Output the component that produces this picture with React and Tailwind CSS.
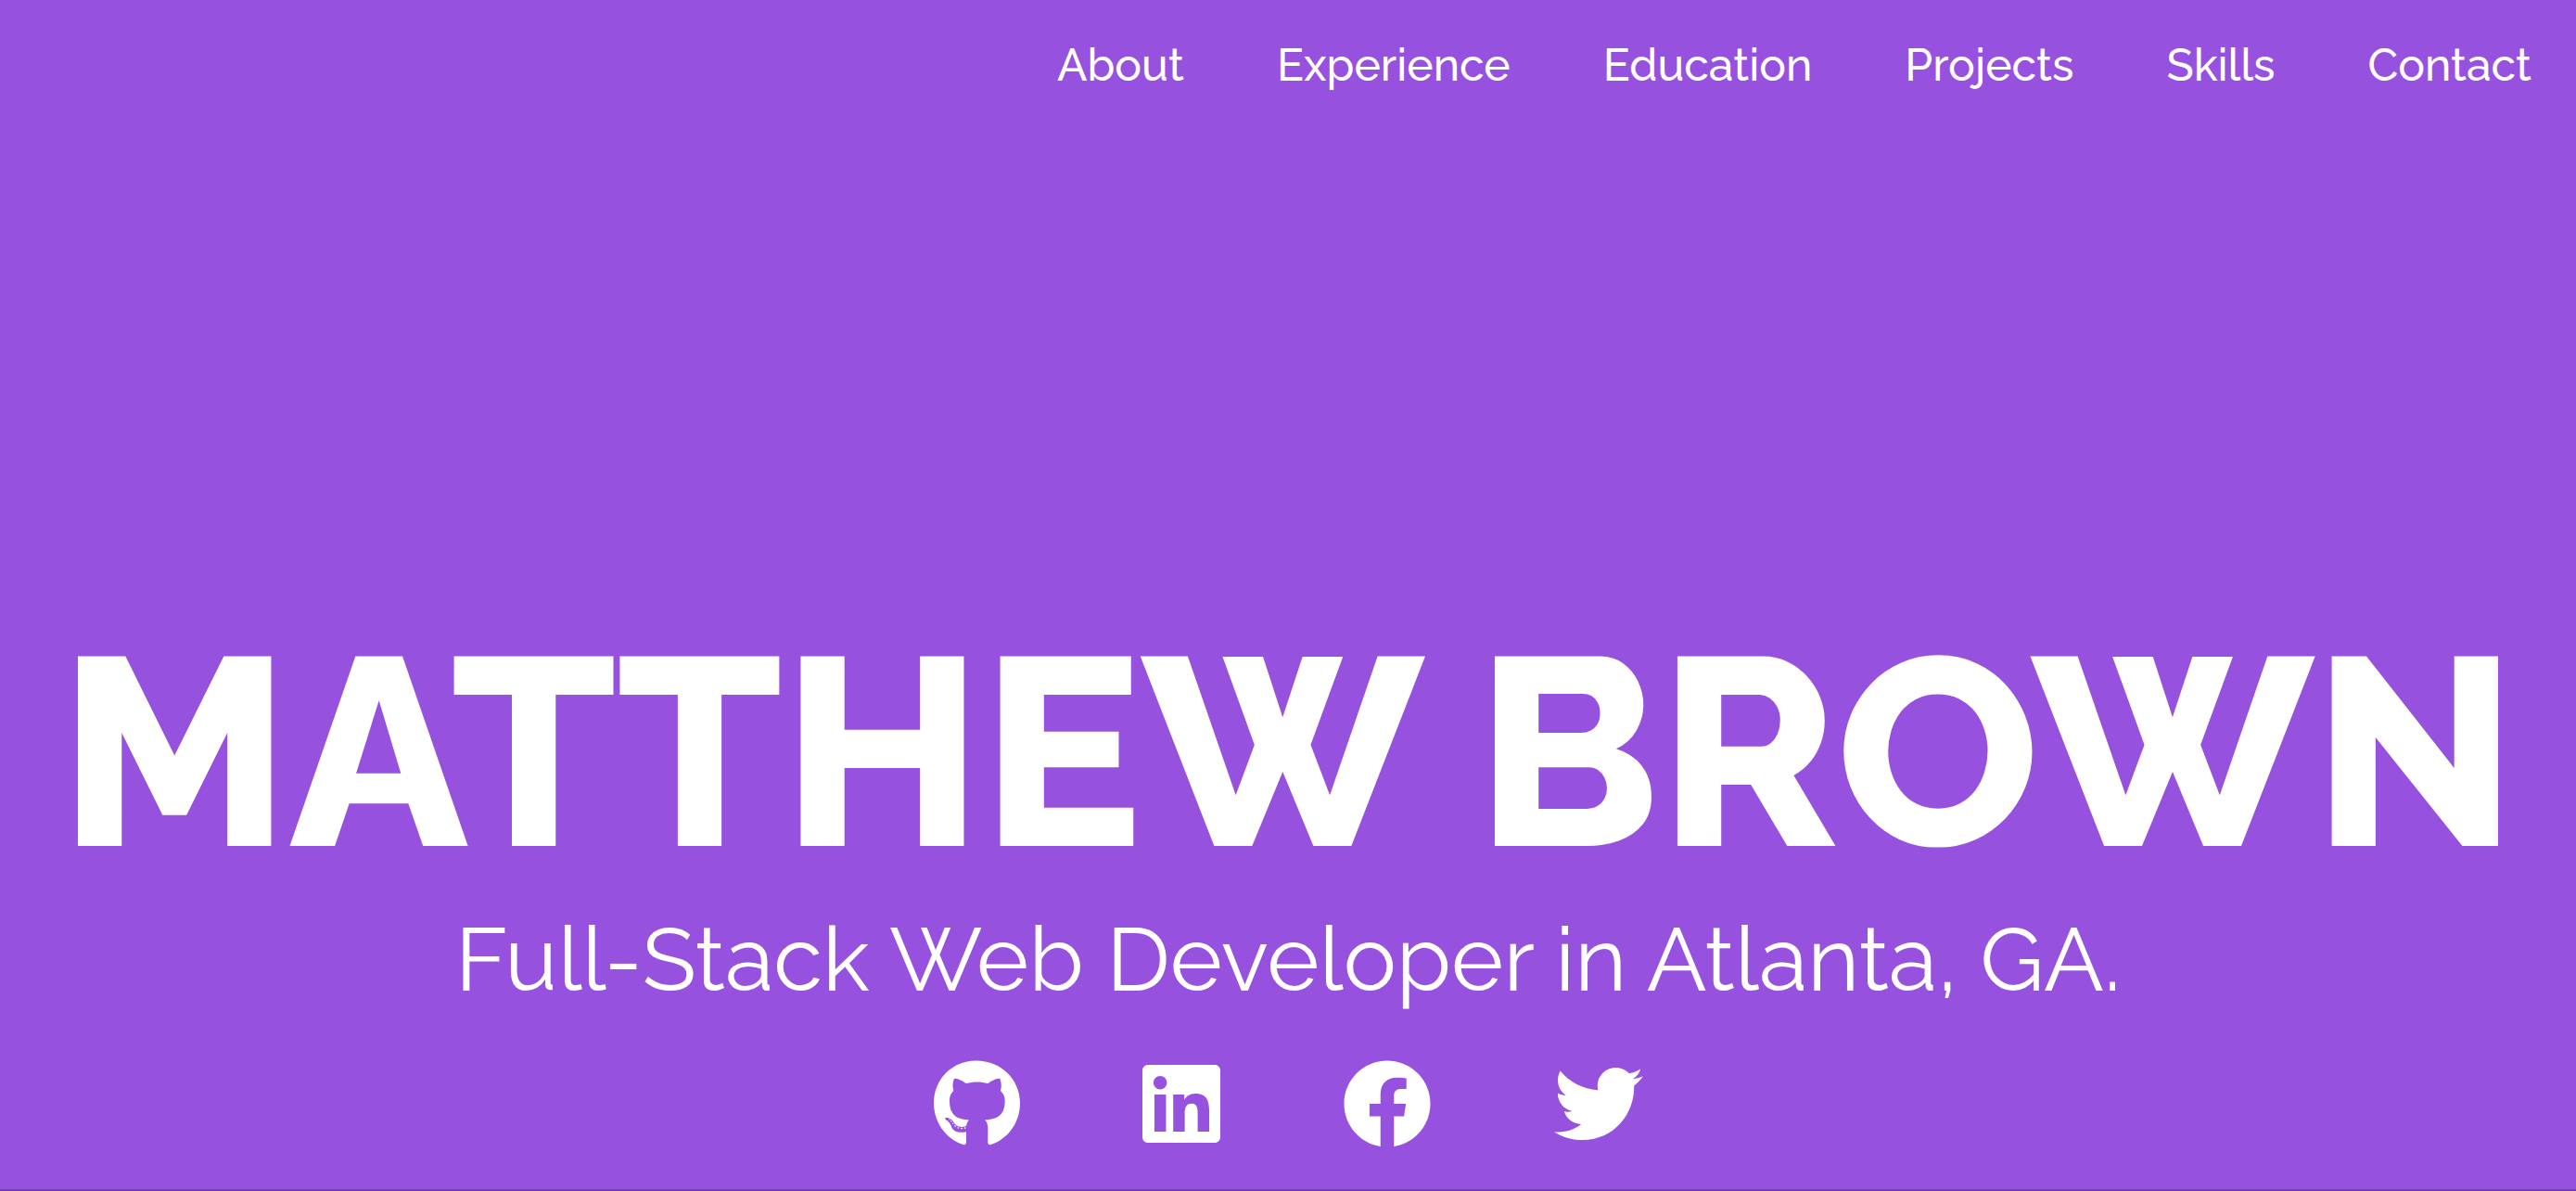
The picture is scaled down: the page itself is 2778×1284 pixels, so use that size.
import { FaGithub, FaLinkedin, FaFacebook, FaTwitter } from "react-icons/fa";

const sections = ["About", "Experience", "Education", "Projects", "Skills", "Contact"];

const profiles = [
  { name: "GitHub", Icon: FaGithub, width: "w-[93px]" },
  { name: "LinkedIn", Icon: FaLinkedin, width: "w-[84px]" },
  { name: "Facebook", Icon: FaFacebook, width: "w-24" },
  { name: "Twitter", Icon: FaTwitter, width: "w-24" },
];

export default function App() {
  return (
    <div className="flex min-h-screen flex-col border-b-2 border-[#753fb0] bg-[#9751df] font-['Raleway','Lato',sans-serif] text-white">
      <nav aria-label="Main" className="flex flex-wrap justify-end gap-x-25 px-12 py-10">
        {sections.map((s) => (
          <a key={s} href={"#" + s.toLowerCase()} className="text-5xl font-medium leading-[60px]">
            {s}
          </a>
        ))}
      </nav>
      <header className="mt-auto flex flex-col items-center pb-11 text-center">
        <h1 className="whitespace-nowrap text-[288px] font-extrabold leading-[288px]">MATTHEW BROWN</h1>
        <p className="mt-8 text-8xl leading-[96px]">Full-Stack Web Developer in Atlanta, GA.</p>
        <ul className="mt-15 flex gap-33">
          {profiles.map(({ name, Icon, width }) => (
            <li key={name}>
              <a href={"#" + name.toLowerCase()} aria-label={name}>
                <Icon className={"h-24 " + width} />
              </a>
            </li>
          ))}
        </ul>
      </header>
    </div>
  );
}
